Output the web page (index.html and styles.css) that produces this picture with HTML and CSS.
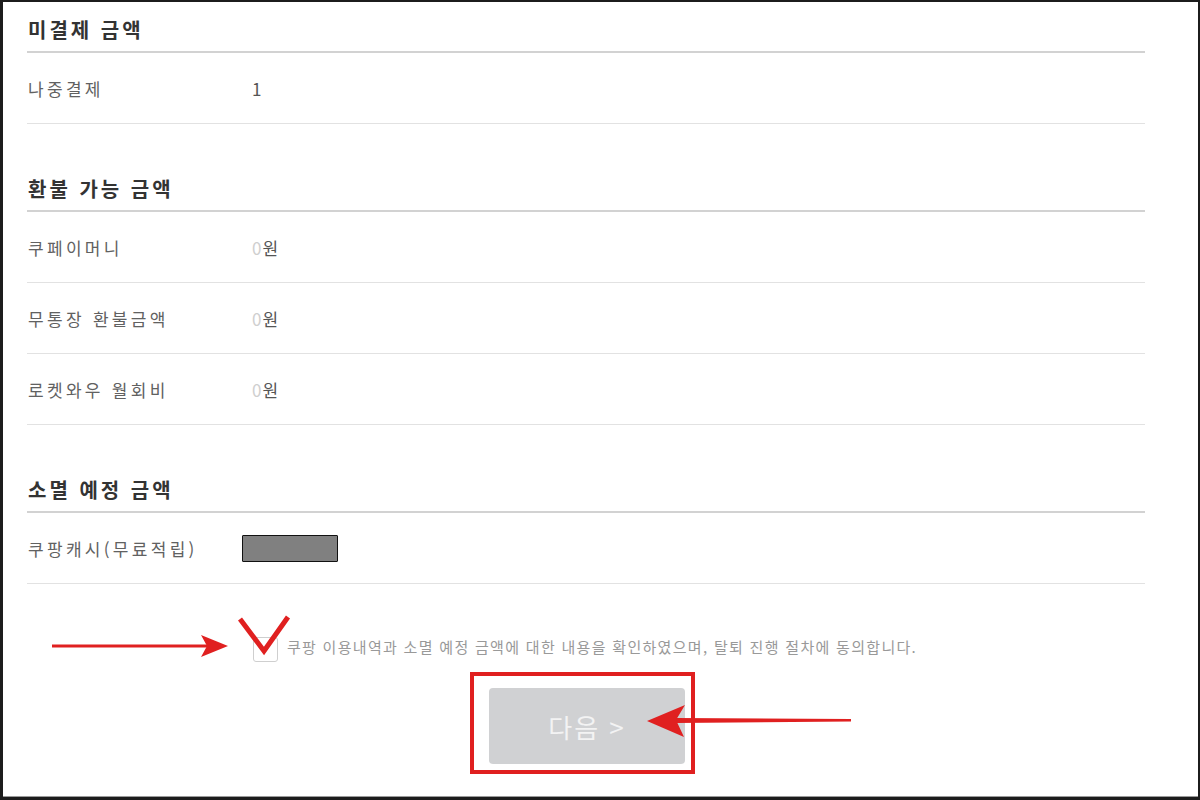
FILE: index.html
```html
<!DOCTYPE html>
<html lang="ko">
<head>
<meta charset="utf-8">
<title>회원탈퇴</title>
<link rel="stylesheet" href="styles.css">
</head>
<body>
<div class="page">
  <div class="content">
    <section class="section first">
      <h2 class="heading">미결제 금액</h2>
      <div class="row"><span class="label">나중결제</span><span class="value">1</span></div>
    </section>
    <section class="section">
      <h2 class="heading">환불 가능 금액</h2>
      <div class="row"><span class="label">쿠페이머니</span><span class="value"><span class="zero">0</span>원</span></div>
      <div class="row"><span class="label">무통장 환불금액</span><span class="value"><span class="zero">0</span>원</span></div>
      <div class="row"><span class="label">로켓와우 월회비</span><span class="value"><span class="zero">0</span>원</span></div>
    </section>
    <section class="section">
      <h2 class="heading">소멸 예정 금액</h2>
      <div class="row"><span class="label">쿠팡캐시(무료적립)</span><span class="value"><span class="redact"></span></span></div>
    </section>
    <div class="agree">
      <span class="checkbox"></span>
      <span class="agree-text">쿠팡 이용내역과 소멸 예정 금액에 대한 내용을 확인하였으며, 탈퇴 진행 절차에 동의합니다.</span>
    </div>
    <div class="actions">
      <button class="next" type="button">다음 &gt;</button>
    </div>
  </div>
</div>
<svg class="annot" width="1200" height="800" viewBox="0 0 1200 800" aria-hidden="true">
  <rect x="52" y="644.5" width="158" height="3" fill="#e02020"/>
  <polygon points="228,646 201,635 207,646 201,657" fill="#e02020"/>
  <polyline points="240,619 264,651 288,617" fill="none" stroke="#e02020" stroke-width="5"/>
  <rect x="472" y="674" width="221" height="98" fill="none" stroke="#e02020" stroke-width="4"/>
  <polygon points="676,718 851,719 851,721.5 676,723" fill="#e02020"/>
  <polygon points="647,721 685,705 676,720 684,737" fill="#e02020"/>
</svg>
</body>
</html>
```
FILE: styles.css
```css
html, body {
  margin: 0;
  padding: 0;
  background: #1c1c1c;
}
body {
  position: relative;
  width: 1200px;
  height: 800px;
  overflow: hidden;
  font-family: "Noto Sans CJK KR", "Noto Sans", sans-serif;
}
.page {
  box-sizing: border-box;
  width: 1200px;
  height: 800px;
  background: #fff;
  border-style: solid;
  border-color: #1c1c1c;
  border-width: 2px 2px 3px 3px;
  box-shadow: inset 0 -1px 0 #9a9a9a;
}
.content {
  width: 1118px;
  margin-left: 24px;
}
.heading {
  margin: 0;
  padding: 53px 0 9px 1px;
  line-height: 24px;
  font-size: 20px;
  font-weight: 700;
  letter-spacing: 3px;
  color: #333;
  border-bottom: 2px solid #d2d2d2;
}
.first .heading {
  padding-top: 16px;
}
.row {
  display: flex;
  align-items: center;
  height: 70px;
  border-bottom: 1px solid #e2e2e2;
  font-size: 17px;
  letter-spacing: 3.3px;
  color: #616161;
}
.label {
  width: 224px;
  padding-left: 1px;
  flex: none;
}
.value {
  display: flex;
  align-items: center;
  color: #555;
}
.zero {
  color: #cfcfcf;
  letter-spacing: 1px;
}
.redact {
  display: block;
  width: 94px;
  height: 25px;
  margin-left: -10px;
  background: #808080;
  border: 1.5px solid #111;
  border-radius: 1px;
}
.agree {
  display: flex;
  align-items: center;
  justify-content: center;
  gap: 9px;
  margin-top: 52px;
  height: 26px;
  margin-left: -2px;
}
.checkbox {
  box-sizing: border-box;
  width: 25px;
  height: 25px;
  border: 1.5px solid #cfcfcf;
  border-radius: 3px;
  background: #fff;
}
.agree-text {
  font-size: 15px;
  letter-spacing: 1.3px;
  color: #999;
  line-height: 20px;
  margin-top: -4px;
}
.actions {
  display: flex;
  justify-content: center;
  margin-top: 26px;
}
.next {
  width: 196px;
  height: 76px;
  border: none;
  border-radius: 4px;
  background: #d0d1d3;
  color: #f3f3f3;
  font-family: "Noto Sans CJK KR", "Noto Sans", sans-serif;
  font-size: 26px;
  letter-spacing: 2px;
  padding: 0;
  margin-left: 2px;
}
.annot {
  position: absolute;
  left: 0;
  top: 0;
  pointer-events: none;
}
```
